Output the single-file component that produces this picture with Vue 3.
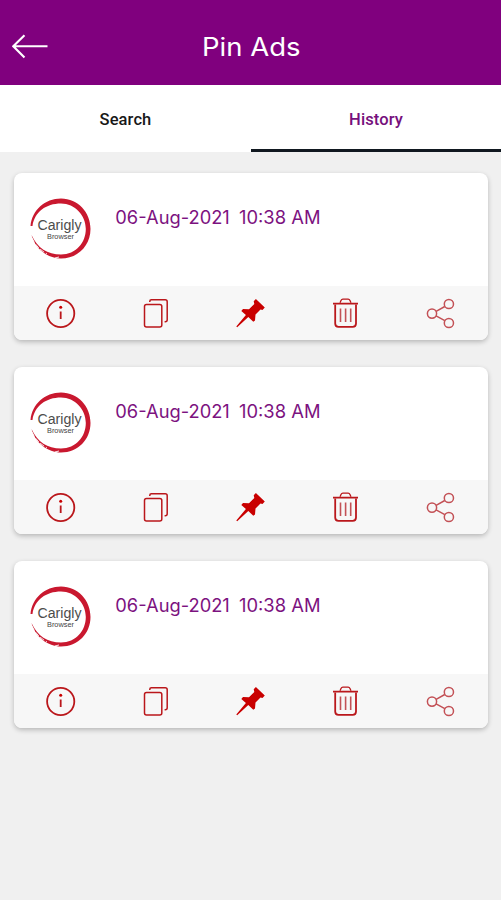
<script setup>
const ads = [
  { id: 1, date: '06-Aug-2021', time: '10:38 AM' },
  { id: 2, date: '06-Aug-2021', time: '10:38 AM' },
  { id: 3, date: '06-Aug-2021', time: '10:38 AM' },
]
</script>

<template>
  <div class="screen">
    <header class="bar">
      <svg class="back" width="36" height="26" viewBox="0 0 36 26">
        <path d="M12.5 1.3 1.3 12.2l11.2 11.2M1.3 12.2H35.5" />
      </svg>
      <svg class="title" width="98" height="36" viewBox="0 0 98 36">
        <text x="-1" y="26.5" textLength="98.5" lengthAdjust="spacingAndGlyphs">Pin Ads</text>
      </svg>
    </header>
    <nav class="tabs">
      <div class="tab">Search</div>
      <div class="tab active">History</div>
    </nav>
    <main class="list">
      <article v-for="ad in ads" :key="ad.id" class="card">
        <div class="body">
          <svg class="logo" width="62" height="62" viewBox="0 0 62 62">
            <path class="ring" d="M.5 28C2 12 15 .5 31 .5c17 0 29.500 14 29.500 30.500S48 60.500 31 60.500C18 60.500 5 51 1.500 37c6 13 16 19.500 29.500 19.500 15 0 24.800-12 24.800-25.500S45 5.600 31 5.600C16 5.600 4.500 14 2.500 28z" />
            <path class="scratch" d="M2 40c3 7 8 12 15 16M5 42l7 8M25 60l4-1" />
            <text class="name" x="7.500" y="31.800" textLength="44" lengthAdjust="spacingAndGlyphs">Carigly</text>
            <text class="sub" x="17" y="41" textLength="27" lengthAdjust="spacingAndGlyphs">Browser</text>
          </svg>
          <svg class="stamp" width="206" height="26" viewBox="0 0 206 26">
            <text x="-.7" y="19" textLength="114.500" lengthAdjust="spacingAndGlyphs">{{ ad.date }}</text>
            <text x="123" y="19" textLength="81.500" lengthAdjust="spacingAndGlyphs">{{ ad.time }}</text>
          </svg>
        </div>
        <div class="actions">
          <svg viewBox="0 0 32 32">
            <circle cx="15.700" cy="15.500" r="13.600" />
            <path d="M15.700 13.500v7.500" />
            <circle class="solid" cx="15.700" cy="9.300" r="1.500" />
          </svg>
          <svg class="thin" viewBox="0 0 32 32">
            <rect x="4.500" y="6.500" width="17.300" height="22.500" rx="2" />
            <path d="M9.800 4V3.300q0-1.600 1.600-1.600h13.800q2 0 2 2v18q0 2-2 2h-.6" />
          </svg>
          <svg viewBox="0 0 32 32">
            <path class="solid" d="M20.900.9 29.800 9.500 27.500 12 25.500 11.400 20.500 16.600 20 22.400 18.300 23.800 13.300 19.100 2.200 29.300 1.300 28.400 10.900 17 6.300 12.900 8 11.100 14 11.200 19.300 6 18.700 3.300z" />
          </svg>
          <svg viewBox="0 0 32 32">
            <path d="M3 5.600h25" />
            <path class="fine" d="M10 4.700 11 2.500q.6-1.300 1.900-1.300h5.200q1.300 0 1.900 1.300l1 2.200" />
            <path d="M5.200 6.500v19q0 3.300 3.300 3.300h14.200q3.300 0 3.300-3.300v-19" />
            <path class="bars" d="M10.500 10.500V24M15.600 10.500V24M20.700 10.500V24" />
          </svg>
          <svg class="share" viewBox="0 0 32 32">
            <circle cx="7" cy="15.600" r="4.600" />
            <circle cx="23.900" cy="6" r="4.600" />
            <circle cx="23.900" cy="25" r="4.600" />
            <path d="m11.100 13.400 8.700-4.900M11.100 17.900l8.700 4.800" />
          </svg>
        </div>
      </article>
    </main>
  </div>
</template>

<style>
body {
  background: #f0f0f0;
}
</style>

<style scoped>
.screen {
  height: 900px;
  overflow: hidden;
  background: #f0f0f0;
  font-family: Roboto, sans-serif;
}
.bar {
  box-sizing: border-box;
  height: 85px;
  display: grid;
  grid-template-columns: 203px 98px 1fr;
  align-items: center;
  padding-top: 8px;
  background: #80007e;
}
.back {
  margin-left: 12px;
  fill: none;
  stroke: #fff;
  stroke-width: 2.1;
}
.title {
  overflow: visible;
  fill: #fff;
  font: 400 25px Inter, sans-serif;
}
.tabs {
  display: grid;
  grid-template-columns: 251px 250px;
  height: 67px;
  background: #fff;
}
.tab {
  box-sizing: border-box;
  border-bottom: 3px solid transparent;
  padding-top: 4px;
  display: flex;
  align-items: center;
  justify-content: center;
  font-size: 16.5px;
  font-weight: 500;
  letter-spacing: 0.1px;
  color: #181818;
}
.active {
  color: #76107c;
  border-bottom-color: #111820;
}
.list {
  display: flex;
  flex-direction: column;
  gap: 27px;
  padding: 21px 13px 0 13.5px;
}
.card {
  height: 167px;
  border-radius: 8px;
  overflow: hidden;
  background: #fff;
  box-shadow: 0 2px 5px rgba(0, 0, 0, 0.24);
}
.body {
  height: 113px;
  display: flex;
  align-items: flex-start;
}
.logo {
  margin: 25px 0 0 16px;
}
.ring {
  fill: #c9182f;
}
.scratch {
  fill: none;
  stroke: #fff;
  stroke-width: 0.9;
  stroke-dasharray: 5 2;
}
.name {
  fill: #4c4c4c;
  font: 400 14px "Liberation Sans", sans-serif;
}
.sub {
  fill: #444;
  font: 400 6.5px "Liberation Sans", sans-serif;
}
.stamp {
  overflow: visible;
  margin: 32px 0 0 24.5px;
  fill: #7c127f;
  font: 400 18px Inter, sans-serif;
}
.actions {
  box-sizing: border-box;
  height: 54px;
  padding-top: 1px;
  display: grid;
  grid-template-columns: repeat(5, 1fr);
  align-items: center;
  justify-items: center;
  background: #f7f7f7;
}
.actions svg {
  width: 32px;
  height: 32px;
  fill: none;
  stroke: #ba171b;
  stroke-width: 1.8;
}
.actions .thin {
  stroke-width: 1.5;
}
.actions .fine {
  stroke-width: 1.3;
}
.actions .bars {
  stroke: #c35156;
  stroke-width: 1.6;
}
.actions .share {
  stroke: #c35156;
  stroke-width: 1.5;
}
.actions .solid {
  fill: #c90000;
  stroke: none;
}
</style>
